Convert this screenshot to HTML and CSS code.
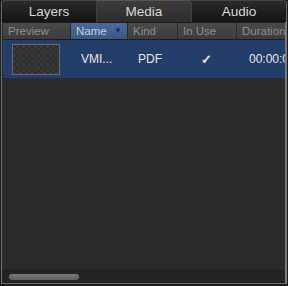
FILE: index.html
```html
<!DOCTYPE html>
<html>
<head>
<meta charset="utf-8">
<link rel="stylesheet" href="styles.css">
</head>
<body>
<div class="frame">
  <div class="tabs">
    <div class="tab">Layers</div>
    <div class="tab active">Media</div>
    <div class="tab last">Audio</div>
  </div>
  <div class="panel">
    <div class="header">
      <div class="col c-preview">Preview</div>
      <div class="col c-name sorted">Name<span class="arrow">▼</span></div>
      <div class="col c-kind">Kind</div>
      <div class="col c-use">In Use</div>
      <div class="col c-dur">Duration</div>
    </div>
    <div class="row selected">
      <div class="cell c-preview"><div class="thumb"></div></div>
      <div class="cell c-name">VMI...</div>
      <div class="cell c-kind">PDF</div>
      <div class="cell c-use check">✓</div>
      <div class="cell c-dur">00:00:0</div>
    </div>
    <div class="empty"></div>
    <div class="hscroll"><div class="thumbbar"></div></div>
  </div>
</div>
</body>
</html>
```
FILE: styles.css
```css
html, body {
  margin: 0;
  padding: 0;
  background: #1a1a1a;
}
body {
  width: 288px;
  height: 286px;
  overflow: hidden;
  font-family: "Liberation Sans", Arial, sans-serif;
}
.frame {
  width: 288px;
  height: 286px;
  box-sizing: border-box;
  display: flex;
  flex-direction: column;
  background: #1c1c1c;
  padding: 0 1px 2px 1px;
}
.tabs {
  display: flex;
  height: 22px;
  flex: none;
}
.tab {
  flex: 1;
  display: flex;
  align-items: center;
  justify-content: center;
  color: #d8d8d8;
  font-size: 13.5px;
  background: linear-gradient(#2a2a2a, #141414);
  border-top: 1px solid #444;
  border-left: 1px solid #3e3e3e;
  box-sizing: border-box;
}
.tab:first-child {
  border-left: 1px solid #6a6a6a;
  border-top-left-radius: 3px;
}
.tab.active {
  background: linear-gradient(#3c3c3c, #2c2c2c);
  border-top-color: #555;
}
.tab.last {
  border-top-right-radius: 4px;
  border-right: 1px solid #6a6a6a;
}
.panel {
  flex: 1;
  display: flex;
  flex-direction: column;
  border-left: 1px solid #6e6e6e;
  border-right: 2px solid #7a7a7a;
  border-bottom: 1px solid #6a6a6a;
  background: #2a2a2a;
  padding-left: 1px;
}
.header {
  display: flex;
  height: 16px;
  flex: none;
  background: linear-gradient(#4a4a4a, #3c3c3c);
  border-bottom: 1px solid #1b1b1b;
  border-top: 1px solid #1b1b1b;
}
.col {
  color: #8e8e8e;
  font-size: 11.5px;
  line-height: 16px;
  padding-left: 5px;
  box-sizing: border-box;
  border-right: 1px solid #2c2c2c;
  white-space: nowrap;
  overflow: hidden;
  position: relative;
}
.col.sorted {
  background: linear-gradient(#4a6a98, #3b5886);
  color: #c6d0de;
}
.arrow {
  position: absolute;
  right: 5px;
  top: 0;
  font-size: 8px;
  color: #1d2c44;
}
.c-preview { width: 68px; }
.c-name { width: 57px; }
.c-kind { width: 50px; }
.c-use { width: 59px; }
.c-dur { flex: 1; border-right: none; }
.row {
  display: flex;
  height: 38px;
  flex: none;
}
.row.selected {
  background: #233d69;
  border-bottom: 1px solid #1e2d46;
}
.cell {
  color: #e8e8e8;
  font-size: 12px;
  display: flex;
  align-items: center;
  padding-left: 9px;
  box-sizing: border-box;
  white-space: nowrap;
  overflow: hidden;
}
.cell.c-preview {
  padding-left: 9px;
}
.cell.c-name { padding-left: 10px; }
.cell.c-kind { padding-left: 10px; }
.cell.c-use { padding-left: 23px; font-size: 13px; font-weight: bold; }
.cell.c-dur { padding-left: 12px; }
.thumb {
  width: 48px;
  height: 31px;
  box-sizing: border-box;
  border: 1px solid #6c6c6c;
  background-color: #2e2e2e;
  background-image:
    linear-gradient(45deg, #383838 25%, transparent 25%, transparent 75%, #383838 75%),
    linear-gradient(45deg, #383838 25%, transparent 25%, transparent 75%, #383838 75%);
  background-size: 6px 6px;
  background-position: 0 0, 3px 3px;
}
.empty {
  flex: 1;
  background: #2a2a2a;
}
.hscroll {
  height: 12px;
  flex: none;
  background: #232323;
  border-top: 1px solid #1e1e1e;
  display: flex;
  align-items: center;
  padding-left: 6px;
}
.thumbbar {
  width: 70px;
  height: 6px;
  border-radius: 3px;
  background: linear-gradient(#777, #5e5e5e);
}
```
